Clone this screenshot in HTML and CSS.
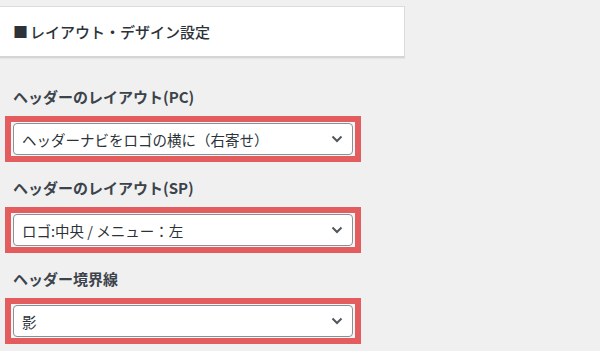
FILE: index.html
```html
<!DOCTYPE html>
<html lang="ja">
<head>
    <meta charset="UTF-8">
    <meta name="viewport" content="width=device-width, initial-scale=1.0">
    <title>レイアウト・デザイン設定</title>
    <link rel="stylesheet" href="styles.css">
</head>
<body>
    <div class="panel">
        <h2 class="panel-title"><span class="mark">■</span>レイアウト・デザイン設定</h2>
    </div>

    <div class="settings">
        <div class="setting">
            <div class="setting-label">ヘッダーのレイアウト(PC)</div>
            <div class="highlight">
                <div class="select">
                    <span>ヘッダーナビをロゴの横に（右寄せ）</span>
                    <svg class="chevron" width="12" height="8" viewBox="0 0 12 8"><path d="M1.5 1.5 L6 6 L10.5 1.5" fill="none" stroke="#50575e" stroke-width="2"/></svg>
                </div>
            </div>
        </div>

        <div class="setting">
            <div class="setting-label">ヘッダーのレイアウト(SP)</div>
            <div class="highlight">
                <div class="select">
                    <span>ロゴ:中央 / メニュー：左</span>
                    <svg class="chevron" width="12" height="8" viewBox="0 0 12 8"><path d="M1.5 1.5 L6 6 L10.5 1.5" fill="none" stroke="#50575e" stroke-width="2"/></svg>
                </div>
            </div>
        </div>

        <div class="setting">
            <div class="setting-label">ヘッダー境界線</div>
            <div class="highlight">
                <div class="select">
                    <span>影</span>
                    <svg class="chevron" width="12" height="8" viewBox="0 0 12 8"><path d="M1.5 1.5 L6 6 L10.5 1.5" fill="none" stroke="#50575e" stroke-width="2"/></svg>
                </div>
            </div>
        </div>
    </div>
</body>
</html>
```

FILE: styles.css
```css
body {
    margin: 0;
    padding: 0;
    background-color: #f0f0f1;
    font-family: "Noto Sans CJK JP", "Noto Sans", sans-serif;
    color: #1d2327;
}
.panel {
    margin-top: 6px;
    width: 405px;
    box-sizing: border-box;
    background-color: #fff;
    border: 1px solid #dcdcde;
    border-left: none;
    border-bottom: 2px solid #d5d5d8;
    box-shadow: 0 1px 1px rgba(0, 0, 0, 0.04);
}
.panel-title {
    margin: 0;
    padding-left: 13px;
    font-size: 15px;
    font-weight: 500;
    line-height: 49px;
    color: #2c3338;
}
.mark {
    margin-right: 2px;
}
.settings {
    padding-left: 5px;
    padding-top: 29px;
}
.setting {
    margin-bottom: 16px;
}
.setting-label {
    padding-left: 8px;
    margin-bottom: 9px;
    font-size: 15px;
    font-weight: 700;
    line-height: 20px;
    color: #3c434a;
}
.highlight {
    width: 340px;
    border: 6px solid #e35c5e;
    padding: 1px 2px;
    background-color: #f6f6f6;
}
.select {
    display: flex;
    align-items: center;
    justify-content: space-between;
    height: 32px;
    box-sizing: border-box;
    padding: 0 9px 0 8px;
    background-color: #fff;
    border: 1px solid #8c8f94;
    border-radius: 4px;
    font-size: 14.5px;
    color: #2c3338;
}
.chevron {
    display: block;
}
```
